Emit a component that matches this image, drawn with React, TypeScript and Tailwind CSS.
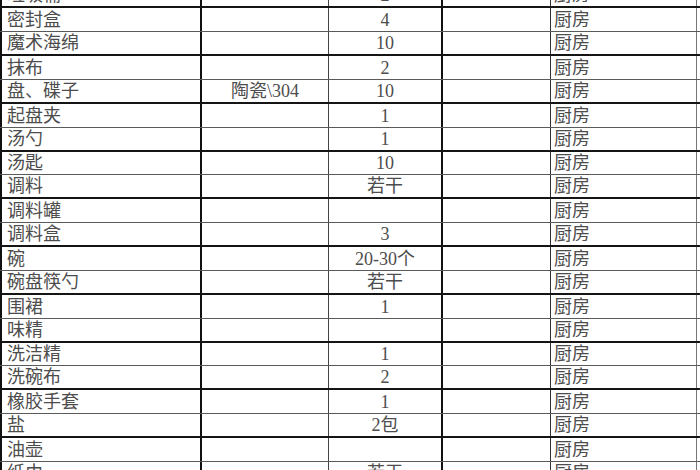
type Row = [string, string, string, string, string]

const rows: Row[] = [
  ['垃圾桶', '', '2', '', '厨房'],
  ['密封盒', '', '4', '', '厨房'],
  ['魔术海绵', '', '10', '', '厨房'],
  ['抹布', '', '2', '', '厨房'],
  ['盘、碟子', '陶瓷\\304', '10', '', '厨房'],
  ['起盘夹', '', '1', '', '厨房'],
  ['汤勺', '', '1', '', '厨房'],
  ['汤匙', '', '10', '', '厨房'],
  ['调料', '', '若干', '', '厨房'],
  ['调料罐', '', '', '', '厨房'],
  ['调料盒', '', '3', '', '厨房'],
  ['碗', '', '20-30个', '', '厨房'],
  ['碗盘筷勺', '', '若干', '', '厨房'],
  ['围裙', '', '1', '', '厨房'],
  ['味精', '', '', '', '厨房'],
  ['洗洁精', '', '1', '', '厨房'],
  ['洗碗布', '', '2', '', '厨房'],
  ['橡胶手套', '', '1', '', '厨房'],
  ['盐', '', '2包', '', '厨房'],
  ['油壶', '', '', '', '厨房'],
  ['纸巾', '', '若干', '', '厨房'],
]

export default function App() {
  return (
    <div
      className="w-[700px] h-[470px] overflow-hidden bg-white text-[18px] text-[#4d4d4d]"
      style={{ fontFamily: '"Liberation Serif", "Noto Sans CJK SC", serif' }}
    >
      {/* first row is cut by the top edge, as in the screenshot */}
      <div className="-mt-[16px] flex flex-col">
        {rows.map((r, i) => (
          <div
            key={i}
            className={
              'grid grid-cols-[202px_127px_114px_108px_146px] ' +
              (i % 2 === 0 ? 'border-b-2 border-[#151515] ' : 'border-b border-[#5a5a5a] ') +
              (i % 8 === 7 ? 'h-[23px]' : 'h-[24px]')
            }
          >
            <div className="border-l-2 border-r-2 border-[#111] pl-[5px] flex items-center leading-none whitespace-nowrap">
              {r[0]}
            </div>
            <div className="border-r border-[#444] flex items-center justify-center leading-none">{r[1]}</div>
            <div className="border-r-2 border-[#111] flex items-center justify-center leading-none">{r[2]}</div>
            <div className="border-r border-[#333] flex items-center leading-none">{r[3]}</div>
            <div className="border-r border-[#777] pl-[3px] flex items-center leading-none">{r[4]}</div>
          </div>
        ))}
      </div>
    </div>
  )
}
